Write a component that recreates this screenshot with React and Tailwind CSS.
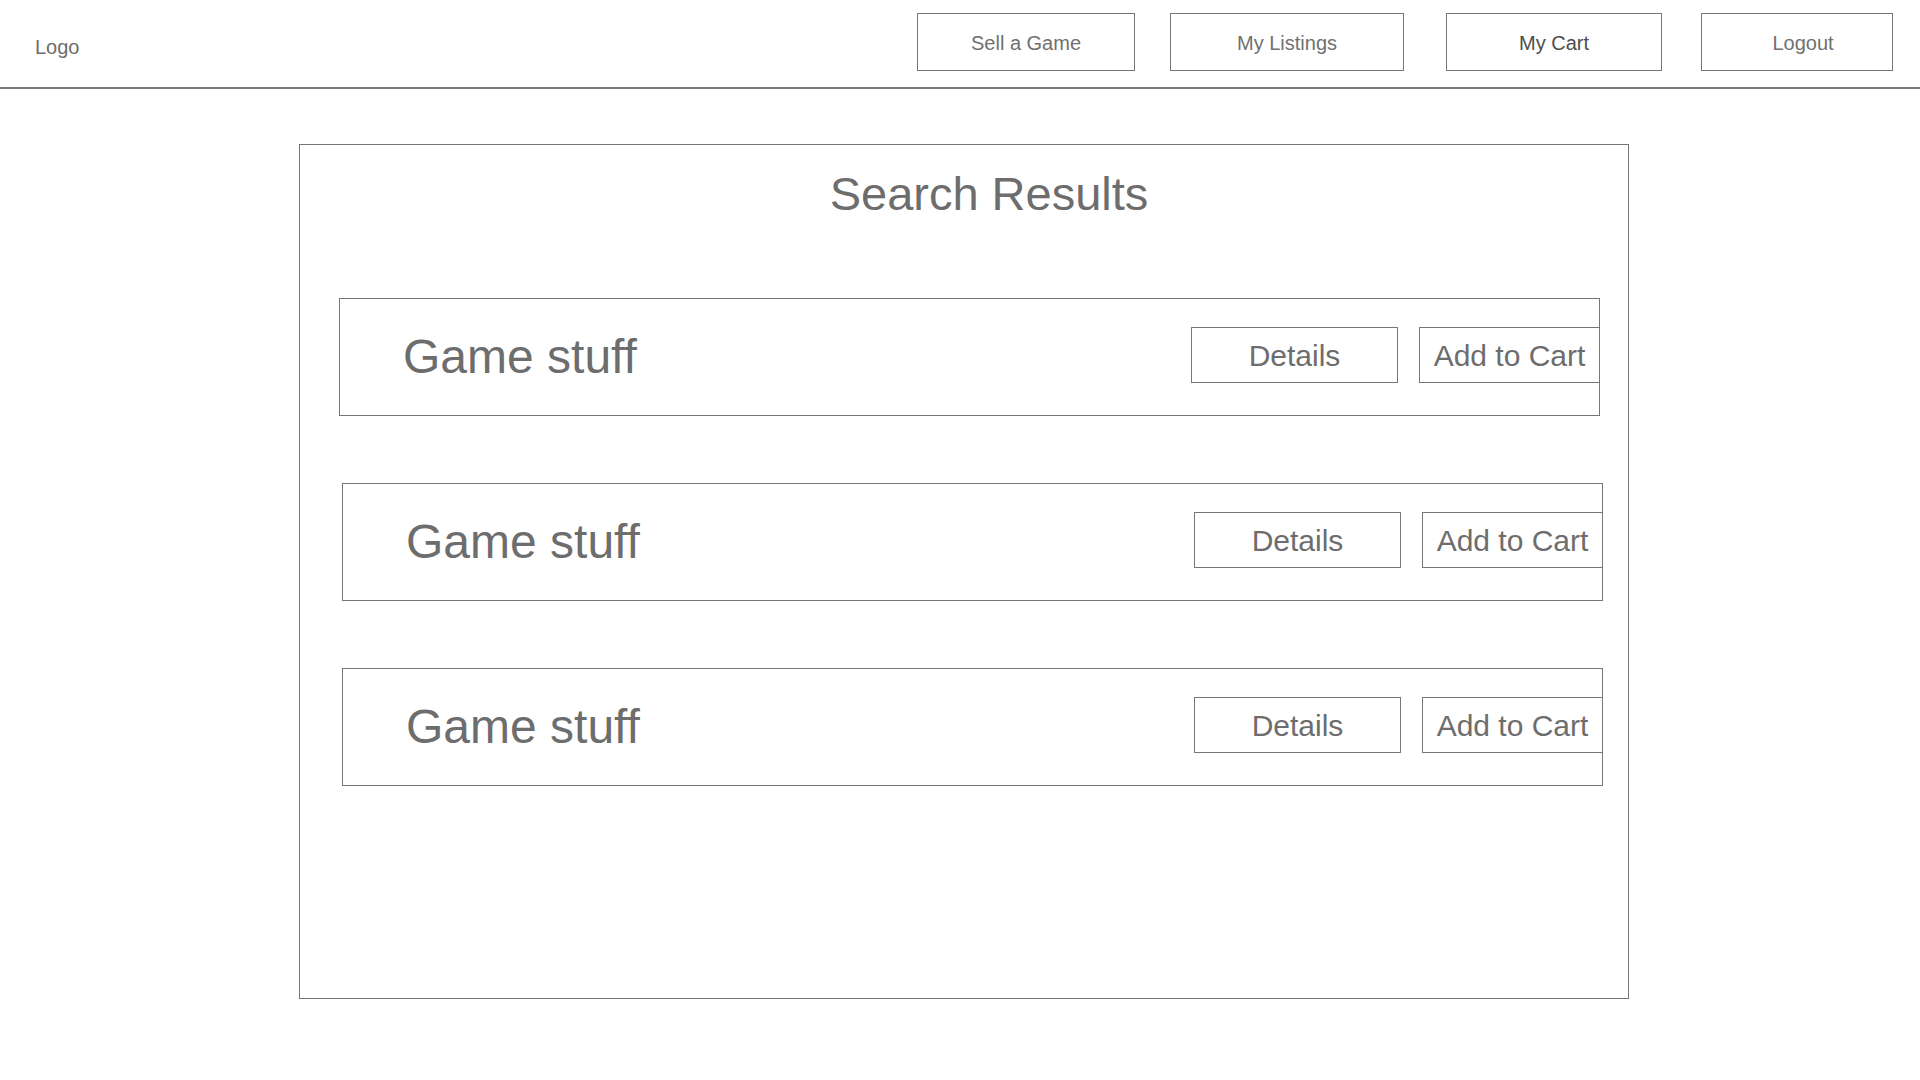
const navItems = [
  { label: 'Sell a Game', width: 'w-[218px]', gap: 'ml-0', shift: 'pl-0', active: false },
  { label: 'My Listings', width: 'w-[234px]', gap: 'ml-[35px]', shift: 'pl-0', active: false },
  { label: 'My Cart', width: 'w-[216px]', gap: 'ml-[42px]', shift: 'pl-0', active: true },
  { label: 'Logout', width: 'w-[192px]', gap: 'ml-[39px]', shift: 'pl-[12px]', active: false },
];

const results = [
  { id: 1, name: 'Game stuff', offset: 'ml-[39px]', top: 'mt-[81px]' },
  { id: 2, name: 'Game stuff', offset: 'ml-[42px]', top: 'mt-[67px]' },
  { id: 3, name: 'Game stuff', offset: 'ml-[42px]', top: 'mt-[67px]' },
];

function Header() {
  return (
    <header className="flex h-[89px] w-full border-b-2 border-[#7a7a7a]">
      <div className="pl-[35px] pt-[37px] text-[20px] leading-[20px] text-[#6d6d6d]">Logo</div>
      <nav className="ml-auto flex items-start pr-[27px] pt-[13px]">
        {navItems.map((item) => (
          <button
            key={item.label}
            className={`${item.width} ${item.gap} ${item.shift} flex h-[58px] items-center justify-center border border-[#767676] bg-white pt-[2px] text-[20px] leading-[20px] ${
              item.active ? 'text-[#4d4d4d]' : 'text-[#707070]'
            }`}
          >
            {item.label}
          </button>
        ))}
      </nav>
    </header>
  );
}

function ResultRow({ item }) {
  return (
    <div className={`${item.offset} ${item.top} flex h-[118px] w-[1261px] border border-[#767676]`}>
      <span className="self-center pl-[63px] text-[48px] leading-[48px] text-[#6d6d6d]">{item.name}</span>
      <div className="ml-auto flex items-start pt-[28px]">
        <button className="flex h-[56px] w-[207px] items-center justify-center border border-[#767676] pt-[2px] text-[30px] leading-[30px] text-[#6d6d6d]">
          Details
        </button>
        <button className="ml-[21px] flex h-[56px] w-[180px] items-center justify-center border-y border-l border-[#767676] pt-[2px] text-[30px] leading-[30px] text-[#6d6d6d]">
          Add to Cart
        </button>
      </div>
    </div>
  );
}

export default function App() {
  return (
    <div className="min-h-[1080px] w-full bg-white font-['Liberation_Sans',Arial,sans-serif]">
      <Header />
      <main className="ml-[299px] mt-[55px] flex h-[855px] w-[1330px] flex-col border border-[#767676]">
        <h1 className="mt-[25px] pl-[50px] text-center text-[47px] leading-[47px] font-normal text-[#6d6d6d]">
          Search Results
        </h1>
        {results.map((item) => (
          <ResultRow key={item.id} item={item} />
        ))}
      </main>
    </div>
  );
}
